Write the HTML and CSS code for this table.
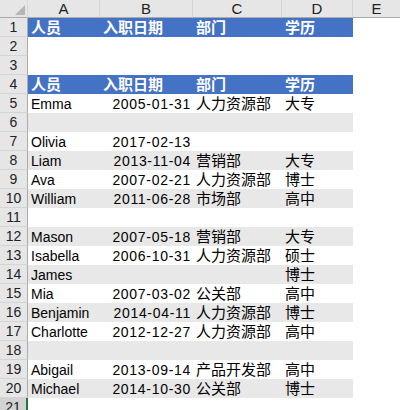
FILE: index.html
```html
<!DOCTYPE html>
<html lang="zh">
<head>
<meta charset="utf-8">
<title>Sheet</title>
<link rel="stylesheet" href="styles.css">
</head>
<body>
<div class="sheet">
  <div class="row colhead">
    <div class="corner"><svg width="27" height="17" viewBox="0 0 27 17"><polygon points="25,5 25,15 15,15" fill="#b5b5b5"/></svg></div>
    <div class="ch">A</div><div class="ch">B</div><div class="ch">C</div><div class="ch">D</div><div class="ch last">E</div>
  </div>
  <div class="row head"><div class="rh">1</div><div class="c cjk hd">人员</div><div class="c cjk hd">入职日期</div><div class="c cjk hd">部门</div><div class="c cjk hd">学历</div><div class="c"></div></div>
  <div class="row"><div class="rh">2</div><div class="c"></div><div class="c"></div><div class="c"></div><div class="c"></div><div class="c"></div></div>
  <div class="row"><div class="rh">3</div><div class="c"></div><div class="c"></div><div class="c"></div><div class="c"></div><div class="c"></div></div>
  <div class="row head"><div class="rh">4</div><div class="c cjk hd">人员</div><div class="c cjk hd">入职日期</div><div class="c cjk hd">部门</div><div class="c cjk hd">学历</div><div class="c"></div></div>
  <div class="row"><div class="rh">5</div><div class="c">Emma</div><div class="c num">2005-01-31</div><div class="c cjk">人力资源部</div><div class="c cjk">大专</div><div class="c"></div></div>
  <div class="row band"><div class="rh">6</div><div class="c"></div><div class="c"></div><div class="c"></div><div class="c"></div><div class="c"></div></div>
  <div class="row"><div class="rh">7</div><div class="c">Olivia</div><div class="c num">2017-02-13</div><div class="c"></div><div class="c"></div><div class="c"></div></div>
  <div class="row band"><div class="rh">8</div><div class="c">Liam</div><div class="c num">2013-11-04</div><div class="c cjk">营销部</div><div class="c cjk">大专</div><div class="c"></div></div>
  <div class="row"><div class="rh">9</div><div class="c">Ava</div><div class="c num">2007-02-21</div><div class="c cjk">人力资源部</div><div class="c cjk">博士</div><div class="c"></div></div>
  <div class="row band"><div class="rh">10</div><div class="c">William</div><div class="c num">2011-06-28</div><div class="c cjk">市场部</div><div class="c cjk">高中</div><div class="c"></div></div>
  <div class="row"><div class="rh">11</div><div class="c"></div><div class="c"></div><div class="c"></div><div class="c"></div><div class="c"></div></div>
  <div class="row band"><div class="rh">12</div><div class="c">Mason</div><div class="c num">2007-05-18</div><div class="c cjk">营销部</div><div class="c cjk">大专</div><div class="c"></div></div>
  <div class="row"><div class="rh">13</div><div class="c">Isabella</div><div class="c num">2006-10-31</div><div class="c cjk">人力资源部</div><div class="c cjk">硕士</div><div class="c"></div></div>
  <div class="row band"><div class="rh">14</div><div class="c">James</div><div class="c"></div><div class="c"></div><div class="c cjk">博士</div><div class="c"></div></div>
  <div class="row"><div class="rh">15</div><div class="c">Mia</div><div class="c num">2007-03-02</div><div class="c cjk">公关部</div><div class="c cjk">高中</div><div class="c"></div></div>
  <div class="row band"><div class="rh">16</div><div class="c">Benjamin</div><div class="c num">2014-04-11</div><div class="c cjk">人力资源部</div><div class="c cjk">博士</div><div class="c"></div></div>
  <div class="row"><div class="rh">17</div><div class="c">Charlotte</div><div class="c num">2012-12-27</div><div class="c cjk">人力资源部</div><div class="c cjk">高中</div><div class="c"></div></div>
  <div class="row band"><div class="rh">18</div><div class="c"></div><div class="c"></div><div class="c"></div><div class="c"></div><div class="c"></div></div>
  <div class="row"><div class="rh">19</div><div class="c">Abigail</div><div class="c num">2013-09-14</div><div class="c cjk">产品开发部</div><div class="c cjk">高中</div><div class="c"></div></div>
  <div class="row band"><div class="rh">20</div><div class="c">Michael</div><div class="c num">2014-10-30</div><div class="c cjk">公关部</div><div class="c cjk">博士</div><div class="c"></div></div>
  <div class="row"><div class="rh sel">21</div><div class="c"></div><div class="c"></div><div class="c"></div><div class="c"></div><div class="c"></div></div>
</div>
</body>
</html>
```

FILE: styles.css
```css
html, body {
  margin: 0;
  padding: 0;
  background: #ffffff;
}
.sheet {
  width: 400px;
  height: 410px;
  overflow: hidden;
  font-family: "Liberation Sans", "Noto Sans CJK SC", sans-serif;
  font-size: 14px;
  color: #000;
}
.row {
  display: grid;
  grid-template-columns: 28px 72px 93px 89px 71px 47px;
  height: 19px;
}
.colhead {
  height: 18px;
  background: #e6e6e6;
}
.corner {
  border-right: 1px solid #d4d4d4;
  border-bottom: 1px solid #ababab;
  height: 17px;
}
.corner svg {
  display: block;
}
.ch {
  height: 17px;
  border-bottom: 1px solid #ababab;
  border-right: 1px solid #d4d4d4;
  text-align: center;
  line-height: 18px;
  font-size: 15px;
  color: #222;
}
.ch.last {
  border-right: none;
}
.rh {
  background: #e6e6e6;
  border-right: 1px solid #ababab;
  border-bottom: 1px solid #d4d4d4;
  height: 18px;
  text-align: center;
  line-height: 19px;
  color: #222;
}
.rh.sel {
  background: #d2d2d2;
  border-right: 2px solid #217346;
}
.c {
  height: 19px;
  line-height: 20px;
  padding: 0 3px;
  white-space: nowrap;
}
.num {
  text-align: right;
  letter-spacing: 0.7px;
  padding-right: 2px;
}
.cjk {
  font-family: "Noto Sans CJK SC", sans-serif;
  font-size: 15px;
  line-height: 18px;
}
.head .c:nth-child(-n+5) {
  background: #4472c4;
}
.band .c:nth-child(-n+5) {
  background: #e8e8e8;
}
.hd {
  color: #fff;
  font-weight: bold;
}
```
